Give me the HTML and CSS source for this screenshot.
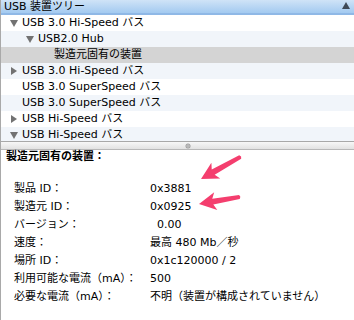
FILE: index.html
```html
<!DOCTYPE html>
<html lang="ja">
<head>
<meta charset="utf-8">
<link rel="stylesheet" href="styles.css">
</head>
<body>
<div class="window">
  <div class="header">
    <span class="header-title">USB 装置ツリー</span>
    <svg class="sort" width="8" height="7" viewBox="0 0 8 7"><polygon points="4,0 8,7 0,7" fill="#3f4a57"/></svg>
  </div>
  <div class="tree">
    <div class="row lvl0"><svg class="tri" width="8" height="7" viewBox="0 0 8 7"><polygon points="0,0 8,0 4,7" fill="#727272"/></svg><span>USB 3.0 Hi-Speed バス</span></div>
    <div class="row alt lvl1"><svg class="tri" width="8" height="7" viewBox="0 0 8 7"><polygon points="0,0 8,0 4,7" fill="#727272"/></svg><span>USB2.0 Hub</span></div>
    <div class="row sel lvl2"><span class="spacer"></span><span>製造元固有の装置</span></div>
    <div class="row alt lvl0"><svg class="tri" width="8" height="8" viewBox="0 0 8 8"><polygon points="1,0 7,4 1,8" fill="#727272"/></svg><span>USB 3.0 Hi-Speed バス</span></div>
    <div class="row lvl0"><span class="spacer"></span><span>USB 3.0 SuperSpeed バス</span></div>
    <div class="row alt lvl0"><span class="spacer"></span><span>USB 3.0 SuperSpeed バス</span></div>
    <div class="row lvl0"><svg class="tri" width="8" height="8" viewBox="0 0 8 8"><polygon points="1,0 7,4 1,8" fill="#727272"/></svg><span>USB Hi-Speed バス</span></div>
    <div class="row alt lvl0"><svg class="tri" width="8" height="7" viewBox="0 0 8 7"><polygon points="0,0 8,0 4,7" fill="#727272"/></svg><span>USB Hi-Speed バス</span></div>
  </div>
  <div class="splitter"><span class="dot"></span></div>
  <div class="detail">
    <div class="detail-title">製造元固有の装置：</div>
    <div class="props">
      <div class="label">製品 ID：</div><div class="value">0x3881</div>
      <div class="label">製造元 ID：</div><div class="value">0x0925</div>
      <div class="label">バージョン：</div><div class="value indent">0.00</div>
      <div class="label">速度：</div><div class="value">最高 480 Mb／秒</div>
      <div class="label">場所 ID：</div><div class="value">0x1c120000 / 2</div>
      <div class="label">利用可能な電流（mA）：</div><div class="value">500</div>
      <div class="label">必要な電流（mA）：</div><div class="value">不明（装置が構成されていません）</div>
    </div>
    <svg class="arrows" width="354" height="320" viewBox="0 0 354 320">
      <g transform="translate(201,179) rotate(-29.4)">
        <polygon points="0,0 17,-9 14,-3 45,-2 46,0 45,2 14,3 17,9" fill="#f43e6e"/>
      </g>
      <g transform="translate(199,204) rotate(-9.9)">
        <polygon points="0,0 17,-9 14,-3 41,-2 42,0 41,2 14,3 17,9" fill="#f43e6e"/>
      </g>
    </svg>
  </div>
</div>
</body>
</html>
```
FILE: styles.css
```css
* { box-sizing: border-box; }
html, body { margin: 0; padding: 0; background: #fff; }
body {
  width: 354px;
  height: 320px;
  overflow: hidden;
  font-family: "DejaVu Sans", "Noto Sans CJK JP", sans-serif;
  font-size: 11px;
  color: #000;
}
.window {
  height: 320px;
  border-left: 1px solid #a9a9a9;
  display: flex;
  flex-direction: column;
}
.header {
  height: 15px;
  background: linear-gradient(#cfe3f7, #a3caf0);
  border-bottom: 2px solid #8fb8e6;
  display: flex;
  align-items: center;
  justify-content: space-between;
  padding: 0 4px 0 3px;
  line-height: 13px;
}
.sort { display: block; margin-top: -2px; }
.tree {
  height: 126px;
  overflow: hidden;
}
.row {
  height: 16px;
  line-height: 16px;
  display: flex;
  align-items: center;
  white-space: nowrap;
  background: #fff;
}
.row.alt { background: #f1f5fa; }
.row.sel { background: #d4d4d4; }
.row.lvl0 { padding-left: 9px; }
.row.lvl1 { padding-left: 25px; }
.row.lvl2 { padding-left: 41px; }
.tri { display: block; margin-right: 4px; flex: none; }
.spacer { display: block; width: 12px; flex: none; }
.splitter {
  height: 9px;
  border-top: 1px solid #a8a8a8;
  border-bottom: 1px solid #b8b8b8;
  background: linear-gradient(#f7f7f7, #e2e2e2);
  display: flex;
  align-items: center;
  justify-content: center;
  padding-left: 20px;
}
.dot {
  width: 4px;
  height: 4px;
  border-radius: 50%;
  background: #b9b9b9;
  box-shadow: 0 0 0 0.5px #999;
}
.detail {
  flex: 1;
  position: relative;
}
.detail-title {
  font-weight: bold;
  line-height: 14px;
  padding-left: 5px;
}
.props {
  margin-top: 16px;
  padding-left: 13px;
  display: grid;
  grid-template-columns: 136px auto;
  grid-auto-rows: 18px;
  line-height: 18px;
  white-space: nowrap;
}
.value.indent { padding-left: 7px; }
.arrows {
  position: absolute;
  left: -1px;
  top: -150px;
  pointer-events: none;
}
```
